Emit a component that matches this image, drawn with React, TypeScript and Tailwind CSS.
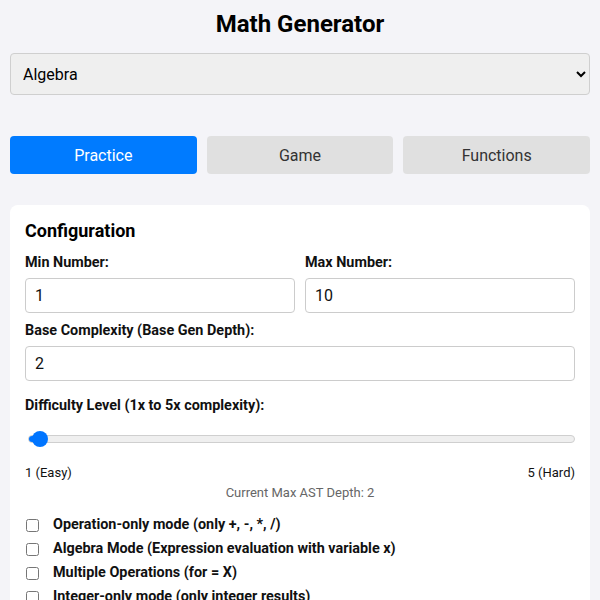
import React from "react";

export default function App() {
  const checks = [
    "Operation-only mode (only +, -, *, /)",
    "Algebra Mode (Expression evaluation with variable x)",
    "Multiple Operations (for = X)",
    "Integer-only mode (only integer results)",
  ];
  return (
    <div className="min-h-[600px] bg-[#f4f4f8] px-[10px] pt-[8px] text-[#111]" style={{ fontFamily: "Roboto, 'Liberation Sans', sans-serif" }}>
      <h1 className="text-center text-[24px] font-bold leading-[32px] text-black">Math Generator</h1>
      <select className="mt-[13px] block h-[42px] w-full rounded-[4px] border border-[#cfcfcf] bg-[#efefef] px-[8px] text-[16px] text-black" defaultValue="Algebra">
        <option>Algebra</option>
        <option>Arithmetic</option>
      </select>
      <div className="mt-[41px] grid grid-cols-3 gap-[10px]">
        <button className="h-[38px] rounded-[4px] bg-[#007bff] pt-[1px] text-[16px] text-white">Practice</button>
        <button className="h-[38px] rounded-[4px] bg-[#e0e0e0] pt-[1px] text-[16px] text-[#333]">Game</button>
        <button className="h-[38px] rounded-[4px] bg-[#e0e0e0] pt-[1px] text-[16px] text-[#333]">Functions</button>
      </div>
      <div className="mt-[31px] rounded-[8px] bg-white px-[15px] pt-[14px] pb-[20px]">
        <h2 className="text-[18px] font-bold leading-[24px] text-black">Configuration</h2>
        <div className="mt-[10px] grid grid-cols-2 gap-[10px]">
          <div>
            <label className="block text-[14.4px] font-bold leading-[20px]">Min Number:</label>
            <input className="mt-[5px] block h-[35px] w-full rounded-[4px] border border-[#ccc] px-[9px] text-[16px]" defaultValue="1" />
          </div>
          <div>
            <label className="block text-[14.4px] font-bold leading-[20px]">Max Number:</label>
            <input className="mt-[5px] block h-[35px] w-full rounded-[4px] border border-[#ccc] px-[9px] text-[16px]" defaultValue="10" />
          </div>
        </div>
        <label className="mt-[8px] block text-[14.4px] font-bold leading-[20px]">Base Complexity (Base Gen Depth):</label>
        <input className="mt-[5px] block h-[35px] w-full rounded-[4px] border border-[#ccc] px-[9px] text-[16px]" defaultValue="2" />
        <label className="mt-[15px] block text-[14.4px] font-bold leading-[20px]">Difficulty Level (1x to 5x complexity):</label>
        <div className="relative mt-[15px] ml-[3px] flex h-[16px] items-center">
          <div className="flex h-[8px] w-full overflow-hidden rounded-full border border-[#cfcfcf] bg-[#efefef]">
            <div className="h-full w-[12px] bg-[#0075ff]" />
          </div>
          <div className="absolute left-[4px] top-0 h-[16px] w-[16px] rounded-full bg-[#0075ff]" />
        </div>
        <div className="mt-[16px] flex justify-between text-[13px] leading-[20px]">
          <span>1 (Easy)</span>
          <span>5 (Hard)</span>
        </div>
        <p className="text-center text-[13px] leading-[20px] text-[#666]">Current Max AST Depth: 2</p>
        <div className="mt-[10px] flex flex-col">
          {checks.map((c) => (
            <label key={c} className="flex h-[24px] items-center gap-[14px] text-[14.4px] font-bold">
              <input type="checkbox" className="ml-[1px] h-[13px] w-[13px]" />
              <span>{c}</span>
            </label>
          ))}
        </div>
      </div>
    </div>
  );
}
